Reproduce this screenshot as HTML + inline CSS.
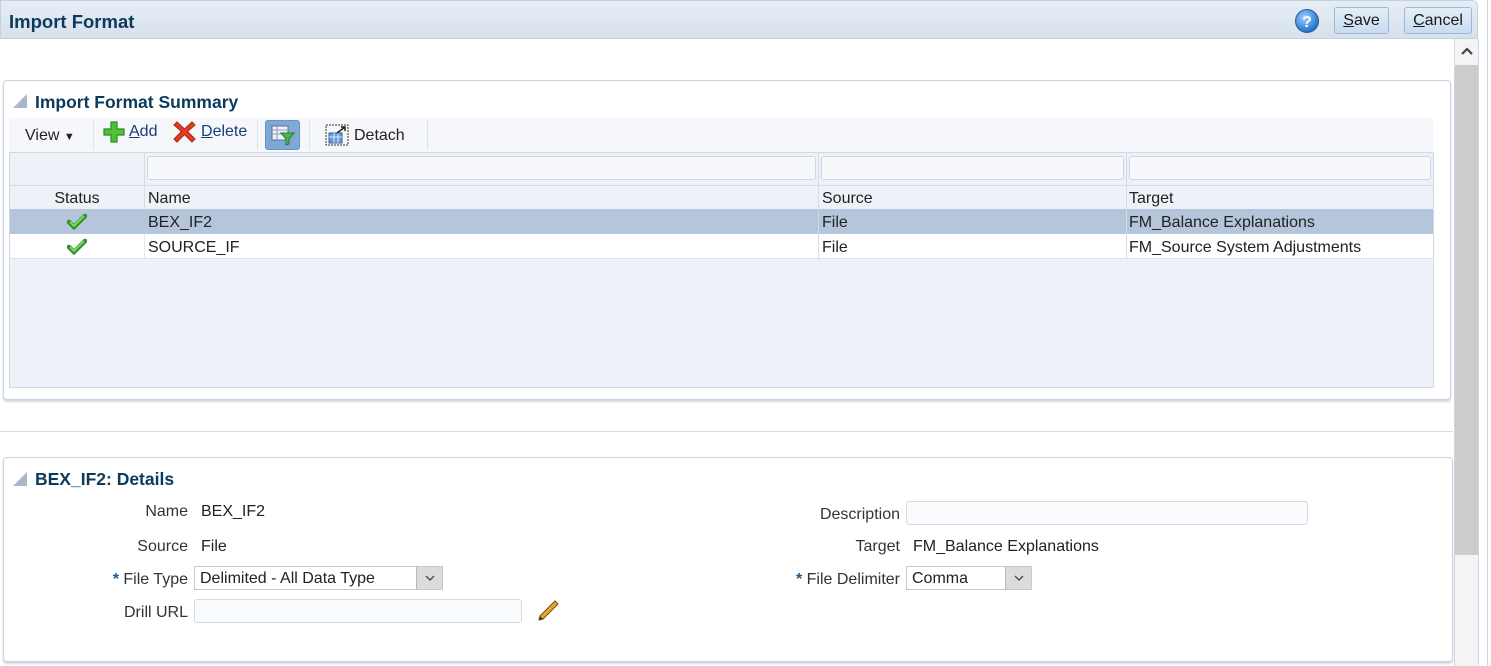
<!DOCTYPE html>
<html><head><meta charset="utf-8">
<style>
*{box-sizing:border-box;margin:0;padding:0}
body{width:1491px;height:666px;position:relative;background:#fff;font-family:"Liberation Sans",Arial,sans-serif;font-size:16px;color:#222;overflow:hidden}
.a{position:absolute}
.hdr{left:0;top:0;width:1478px;height:39px;background:linear-gradient(#e6edf5,#d7e1ec);border:1px solid #c5d1df;border-radius:0 6px 0 0}
.title{font-weight:bold;color:#0b3a5c}
.btn{height:27px;top:7px;border:1px solid #9fb7d3;border-radius:3px;background:linear-gradient(#e4eef9,#c9dcf0);font-size:16px;color:#1a1a1a;text-align:center;line-height:25px}
.panel{border:1px solid #c9d3e0;border-radius:4px;background:#fff;box-shadow:0 2px 2px #d0d6de}
.tri{width:0;height:0;border-left:14px solid transparent;border-bottom:14px solid #a8b8ca}
.cell{position:absolute;line-height:24px;padding-left:4px;top:0}
.fi{position:absolute;height:24px;border:1px solid #ccd6e3;border-radius:3px;background:#f6f8fc}
.lbl{position:absolute;text-align:right;color:#333}
.inp{position:absolute;height:24px;border:1px solid #d3dbe6;border-radius:3px;background:#fafbfd}
.sel{position:absolute;height:24px;border:1px solid #c2c9d2;background:#fff;line-height:24px;padding-left:5px}
.dd{position:absolute;right:0;top:0;width:26px;height:22px;background:#dcdcdc;border-left:1px solid #b9b9b9}
.req{color:#1e5a8c;font-weight:bold}
</style></head><body>

<div class="a hdr"></div>
<div class="a title" style="left:9px;top:11px;font-size:18.5px">Import Format</div>
<svg class="a" style="left:1294px;top:8px" width="26" height="26"><defs><radialGradient id="g" cx="40%" cy="35%" r="65%"><stop offset="0" stop-color="#9fd0ff"/><stop offset="1" stop-color="#1f6fc8"/></radialGradient></defs><circle cx="13" cy="13" r="11.5" fill="url(#g)" stroke="#2a5d9b"/><text x="13" y="19" text-anchor="middle" font-family="Liberation Sans" font-weight="bold" font-size="16" fill="#fff">?</text></svg>
<div class="a btn" style="left:1334px;width:55px"><u>S</u>ave</div>
<div class="a btn" style="left:1404px;width:68px"><u>C</u>ancel</div>

<div class="a" style="left:1454px;top:39px;width:25px;height:627px;background:#f4f4f7;border-left:1px solid #d0d7e2;border-right:1px solid #d0d7e2"></div>
<div class="a" style="left:1455px;top:65px;width:23px;height:490px;background:#cccccc"></div>
<svg class="a" style="left:1460px;top:46px" width="14" height="10"><path d="M2 8 L7 3 L12 8" fill="none" stroke="#444" stroke-width="2.2"/></svg>
<div class="a" style="left:1487px;top:0;width:1px;height:666px;background:#cfd8e4"></div>

<div class="a panel" style="left:3px;top:80px;width:1448px;height:320px"></div>
<div class="a tri" style="left:13px;top:94px"></div>
<div class="a title" style="left:35px;top:92px;font-size:17.5px">Import Format Summary</div>
<div class="a" style="left:9px;top:118px;width:1424px;height:34px;background:#f5f7fa"></div>
<div class="a" style="left:25px;top:127px">View <span style="font-size:11px">&#9660;</span></div>
<div class="a" style="left:93px;top:120px;width:1px;height:30px;background:#dde3ea"></div>
<svg class="a" style="left:102px;top:120px" width="24" height="24"><path d="M9 2h6v7h7v6h-7v7H9v-7H2V9h7z" fill="#4fc23a" stroke="#2c8a22" stroke-width="1.2"/></svg>
<div class="a" style="left:129px;top:123px;color:#1a3d7a"><u>A</u>dd</div>
<svg class="a" style="left:173px;top:120px" width="23" height="23"><path d="M4 2L11.5 9L19 2L22 5L14.5 11.5L22 19L19 22L11.5 14.5L4 22L1 19L8.5 11.5L1 5Z" fill="#e43d22" stroke="#a82612" stroke-width="1"/></svg>
<div class="a" style="left:201px;top:123px;color:#1a3d7a"><u>D</u>elete</div>
<div class="a" style="left:257px;top:120px;width:1px;height:30px;background:#dde3ea"></div>
<div class="a" style="left:265px;top:120px;width:35px;height:30px;background:#7ea9d6;border:1px solid #6a93c0;border-radius:3px"></div>
<svg class="a" style="left:270px;top:124px" width="26" height="22"><rect x="2" y="2" width="16" height="14" fill="#eef2f8" stroke="#5a6f9a"/><path d="M2 6h16M2 10h16M7 2v14" stroke="#8a9cc0"/><path d="M11 9h13l-5 6v5l-3 1v-6z" fill="#49b84a" stroke="#2a7a2a"/></svg>
<div class="a" style="left:309px;top:120px;width:1px;height:30px;background:#dde3ea"></div>
<svg class="a" style="left:325px;top:124px" width="24" height="22"><rect x="1" y="1" width="22" height="20" fill="none" stroke="#333" stroke-dasharray="2 1"/><rect x="4" y="9" width="13" height="10" fill="#6a9bd8" stroke="#3b5f9a"/><path d="M4 13h13M9 9v10M13 9v10" stroke="#dfe9f7"/><path d="M12 9L20 3M16 3h4v4" fill="none" stroke="#222" stroke-width="1.5"/></svg>
<div class="a" style="left:354px;top:127px">Detach</div>
<div class="a" style="left:427px;top:120px;width:1px;height:30px;background:#dde3ea"></div>

<div class="a" style="left:9px;top:152px;width:1425px;height:236px;background:#eef2f8;border:1px solid #cfd8e5"></div>
<div class="a" style="left:10px;top:185px;width:1423px;height:1px;background:#d3dbe7"></div>
<div class="a" style="left:144px;top:153px;width:1px;height:56px;background:#d3dbe7"></div>
<div class="a" style="left:818px;top:153px;width:1px;height:56px;background:#d3dbe7"></div>
<div class="a" style="left:1126px;top:153px;width:1px;height:56px;background:#d3dbe7"></div>
<div class="fi" style="left:147px;top:156px;width:669px"></div>
<div class="fi" style="left:821px;top:156px;width:303px"></div>
<div class="fi" style="left:1129px;top:156px;width:302px"></div>
<div class="cell" style="left:10px;top:187px;width:134px;text-align:center;padding:0">Status</div>
<div class="cell" style="left:144px;top:187px">Name</div>
<div class="cell" style="left:818px;top:187px">Source</div>
<div class="cell" style="left:1125px;top:187px">Target</div>
<div class="a" style="left:10px;top:209px;width:1423px;height:25px;background:#b5c5dc"></div>
<div class="a" style="left:10px;top:234px;width:1423px;height:25px;background:#fff;border-bottom:1px solid #dde3ec"></div>
<div class="a" style="left:144px;top:234px;width:1px;height:25px;background:#e3e8ef"></div>
<div class="a" style="left:818px;top:209px;width:1px;height:50px;background:#d3dbe7"></div>
<div class="a" style="left:1126px;top:209px;width:1px;height:50px;background:#d3dbe7"></div>
<svg class="a" style="left:67px;top:213px" width="20" height="17"><path d="M2 9L7 14L18 3" fill="none" stroke="#2f8f2a" stroke-width="4.5" stroke-linecap="round"/><path d="M3 9L7 13L17 3" fill="none" stroke="#7bd85f" stroke-width="2"/></svg>
<svg class="a" style="left:67px;top:238px" width="20" height="17"><path d="M2 9L7 14L18 3" fill="none" stroke="#2f8f2a" stroke-width="4.5" stroke-linecap="round"/><path d="M3 9L7 13L17 3" fill="none" stroke="#7bd85f" stroke-width="2"/></svg>
<div class="cell" style="left:144px;top:211px">BEX_IF2</div>
<div class="cell" style="left:818px;top:211px">File</div>
<div class="cell" style="left:1125px;top:211px">FM_Balance Explanations</div>
<div class="cell" style="left:144px;top:236px">SOURCE_IF</div>
<div class="cell" style="left:818px;top:236px">File</div>
<div class="cell" style="left:1125px;top:236px">FM_Source System Adjustments</div>

<div class="a" style="left:0;top:431px;width:1453px;height:1px;background:#d3dbe6"></div>

<div class="a panel" style="left:3px;top:457px;width:1450px;height:205px"></div>
<div class="a tri" style="left:13px;top:472px"></div>
<div class="a title" style="left:35px;top:469px;font-size:17.5px">BEX_IF2: Details</div>

<div class="lbl" style="left:60px;top:503px;width:128px">Name</div>
<div class="a" style="left:201px;top:503px">BEX_IF2</div>
<div class="lbl" style="left:60px;top:538px;width:128px">Source</div>
<div class="a" style="left:201px;top:538px">File</div>
<div class="lbl" style="left:60px;top:571px;width:128px"><span class="req">*</span> File Type</div>
<div class="sel" style="left:194px;top:566px;width:249px">Delimited - All Data Type<div class="dd"><svg width="26" height="22"><path d="M9 9l4 4 4-4" fill="none" stroke="#444" stroke-width="1.3"/></svg></div></div>
<div class="lbl" style="left:60px;top:604px;width:128px">Drill URL</div>
<div class="inp" style="left:194px;top:599px;width:328px"></div>
<svg class="a" style="left:535px;top:598px" width="24" height="26"><path d="M20 3L23 6L8 21L4 22L5 18Z" fill="#e8a82a" stroke="#7a4a10" stroke-width="1"/><path d="M4 22L5 18L8 21Z" fill="#333"/></svg>

<div class="lbl" style="left:760px;top:506px;width:140px">Description</div>
<div class="inp" style="left:906px;top:501px;width:402px"></div>
<div class="lbl" style="left:760px;top:538px;width:140px">Target</div>
<div class="a" style="left:913px;top:538px">FM_Balance Explanations</div>
<div class="lbl" style="left:760px;top:571px;width:140px"><span class="req">*</span> File Delimiter</div>
<div class="sel" style="left:906px;top:566px;width:126px">Comma<div class="dd"><svg width="26" height="22"><path d="M9 9l4 4 4-4" fill="none" stroke="#444" stroke-width="1.3"/></svg></div></div>

</body></html>
